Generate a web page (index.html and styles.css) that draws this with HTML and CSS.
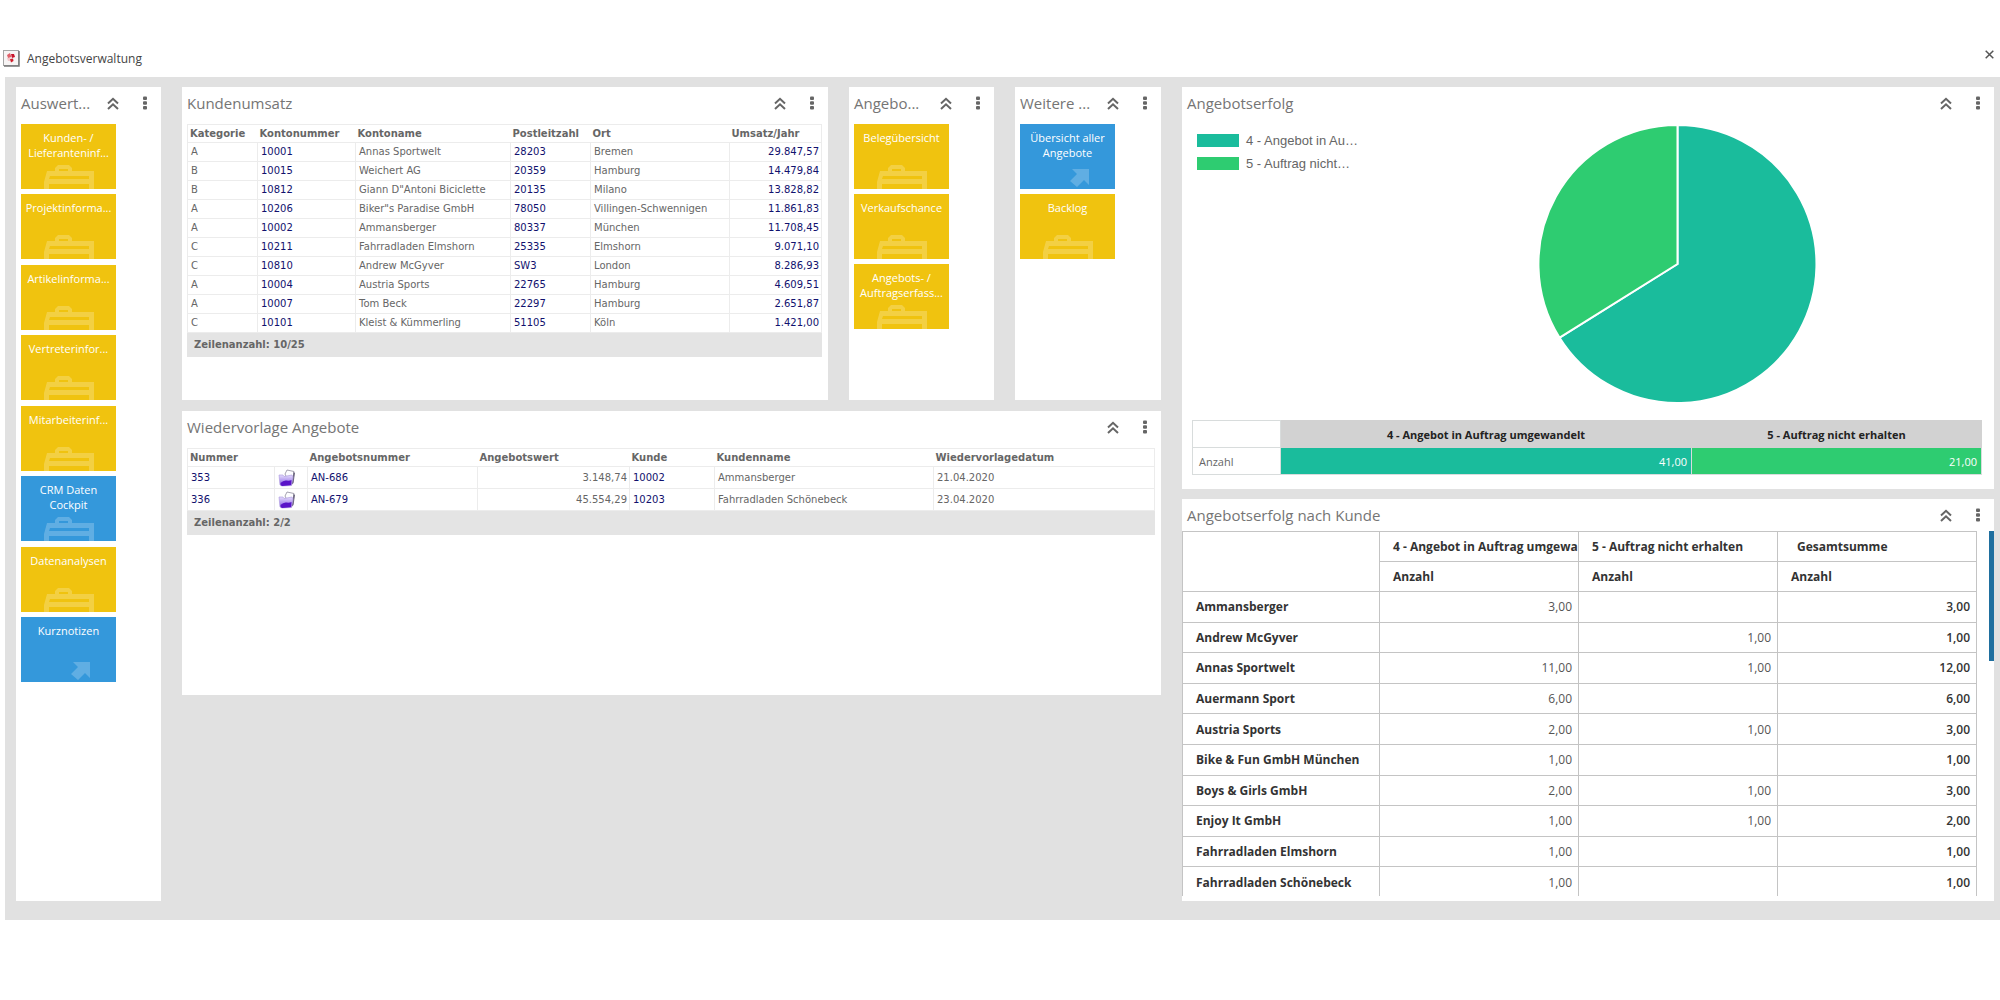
FILE: index.html
```html
<!DOCTYPE html>
<html lang="de">
<head>
<meta charset="utf-8">
<meta name="viewport" content="width=device-width, initial-scale=1">
<title>Angebotsverwaltung</title>
<link rel="stylesheet" href="styles.css">
</head>
<body>
<svg class="sprite" aria-hidden="true">
  <linearGradient id="folder-fill" x1="0" y1="0" x2="0" y2="1"><stop offset="0" stop-color="#e4dcfb"/><stop offset=".5" stop-color="#b39af0"/><stop offset="1" stop-color="#7a45d8"/></linearGradient>
  <symbol id="i-up" viewBox="0 0 12 13"><path d="M1 6.5 6 1.8 11 6.5M1 12 6 7.3 11 12" fill="none" stroke="currentColor" stroke-width="2"/></symbol>
  <symbol id="i-dots" viewBox="0 0 4 14"><rect x="0" y="0.5" width="4" height="3.4" rx="1"/><rect x="0" y="5.3" width="4" height="3.4" rx="1"/><rect x="0" y="10.1" width="4" height="3.4" rx="1"/></symbol>
  <symbol id="i-case" viewBox="0 0 50 24"><path fill-rule="evenodd" d="M3 6H11V3L14 0H25L28 3V6H50V24H45V19H5V24H0V17ZM15 6H24V4H15ZM6 11 5 14H45V11Z"/></symbol>
  <symbol id="i-arrow" viewBox="0 0 19 19"><path d="M2 1H19V17L14 12 7 19 0 13 7 6Z"/></symbol>
  <symbol id="i-folder" viewBox="0 0 18 18">
    <path d="M7 5 9 1l7 1.500-1 11-3 2z" fill="#fdfdff" stroke="#8e8a9c" stroke-width=".8"/>
    <path d="M15.500 3 17 4 15.500 14l-2 2z" fill="#6d6780"/>
    <path d="M1 6h4l1 1.500 8-1.500 1 2-1.500 8.500L4 17 2 16z" fill="url(#folder-fill)" stroke="#a794dd" stroke-width=".6"/>
    <path d="M2.500 14q3-3 6-2.500t5-.5l-.5 5L4 17q-1.500-.5-1.500-3z" fill="#5a14c8"/>
  </symbol>
</svg>

<header class="titlebar">
  <svg class="titlebar-icon" viewBox="0 0 17 17" aria-hidden="true">
    <rect x=".5" y=".5" width="15" height="15" fill="#f7f4f4" stroke="#a5a5a5"/>
    <path d="M16 1V16H1" fill="none" stroke="#777" stroke-width="1.500"/>
    <path d="M4 5 7 3 8.500 7 5 8Z" fill="#e0606a"/><path d="M8 4 11 4 12 7 9 8Z" fill="#c8142a"/>
    <path d="M4 8 7 8 8 11 5 11Z" fill="#f3c6c9"/><path d="M7 9 10 8.500 10.500 11 8 12.500Z" fill="#d01f2c"/>
  </svg>
  <h1>Angebotsverwaltung</h1>
  <button class="close" aria-label="Schließen"><svg viewBox="0 0 9 9"><path d="M.7.7 8.300 8.300M8.300.7.7 8.300" stroke="#555" stroke-width="1.500"/></svg></button>
</header>

<main class="dashboard">
  <section class="panel">
    <header class="panel-head"><h2>Auswert...</h2><button aria-label="Einklappen"><svg class="up"><use href="#i-up"/></svg></button><button aria-label="Menü"><svg class="dots"><use href="#i-dots"/></svg></button></header>
    <div class="tiles tiles-tall">
      <button class="tile"><span>Kunden- /<br>Lieferanteninf...</span><svg class="case"><use href="#i-case"/></svg></button>
      <button class="tile"><span>Projektinforma...</span><svg class="case"><use href="#i-case"/></svg></button>
      <button class="tile"><span>Artikelinforma...</span><svg class="case"><use href="#i-case"/></svg></button>
      <button class="tile"><span>Vertreterinfor...</span><svg class="case"><use href="#i-case"/></svg></button>
      <button class="tile"><span>Mitarbeiterinf...</span><svg class="case"><use href="#i-case"/></svg></button>
      <button class="tile blue"><span>CRM Daten<br>Cockpit</span><svg class="case"><use href="#i-case"/></svg></button>
      <button class="tile"><span>Datenanalysen</span><svg class="case"><use href="#i-case"/></svg></button>
      <button class="tile blue"><span>Kurznotizen</span><svg class="arrow"><use href="#i-arrow"/></svg></button>
    </div>
  </section>

  <div class="middle">
    <section class="panel">
      <header class="panel-head"><h2>Kundenumsatz</h2><button aria-label="Einklappen"><svg class="up"><use href="#i-up"/></svg></button><button aria-label="Menü"><svg class="dots"><use href="#i-dots"/></svg></button></header>
      <div class="panel-body">
        <table class="list">
          <colgroup><col class="w70"><col class="w98"><col class="w155"><col class="w80"><col class="w139"><col class="w92"></colgroup>
          <thead><tr><th>Kategorie</th><th>Kontonummer</th><th>Kontoname</th><th>Postleitzahl</th><th>Ort</th><th>Umsatz/Jahr</th></tr></thead>
          <tbody>
            <tr><td>A</td><td><a href="#">10001</a></td><td>Annas Sportwelt</td><td><a href="#">28203</a></td><td>Bremen</td><td class="num"><a href="#">29.847,57</a></td></tr>
            <tr><td>B</td><td><a href="#">10015</a></td><td>Weichert AG</td><td><a href="#">20359</a></td><td>Hamburg</td><td class="num"><a href="#">14.479,84</a></td></tr>
            <tr><td>B</td><td><a href="#">10812</a></td><td>Giann D"Antoni Biciclette</td><td><a href="#">20135</a></td><td>Milano</td><td class="num"><a href="#">13.828,82</a></td></tr>
            <tr><td>A</td><td><a href="#">10206</a></td><td>Biker"s Paradise GmbH</td><td><a href="#">78050</a></td><td>Villingen-Schwennigen</td><td class="num"><a href="#">11.861,83</a></td></tr>
            <tr><td>A</td><td><a href="#">10002</a></td><td>Ammansberger</td><td><a href="#">80337</a></td><td>München</td><td class="num"><a href="#">11.708,45</a></td></tr>
            <tr><td>C</td><td><a href="#">10211</a></td><td>Fahrradladen Elmshorn</td><td><a href="#">25335</a></td><td>Elmshorn</td><td class="num"><a href="#">9.071,10</a></td></tr>
            <tr><td>C</td><td><a href="#">10810</a></td><td>Andrew McGyver</td><td><a href="#">SW3</a></td><td>London</td><td class="num"><a href="#">8.286,93</a></td></tr>
            <tr><td>A</td><td><a href="#">10004</a></td><td>Austria Sports</td><td><a href="#">22765</a></td><td>Hamburg</td><td class="num"><a href="#">4.609,51</a></td></tr>
            <tr><td>A</td><td><a href="#">10007</a></td><td>Tom Beck</td><td><a href="#">22297</a></td><td>Hamburg</td><td class="num"><a href="#">2.651,87</a></td></tr>
            <tr><td>C</td><td><a href="#">10101</a></td><td>Kleist &amp; Kümmerling</td><td><a href="#">51105</a></td><td>Köln</td><td class="num"><a href="#">1.421,00</a></td></tr>
          </tbody>
          <tfoot><tr><td colspan="6">Zeilenanzahl: 10/25</td></tr></tfoot>
        </table>
      </div>
    </section>

    <section class="panel">
      <header class="panel-head"><h2>Angebo...</h2><button aria-label="Einklappen"><svg class="up"><use href="#i-up"/></svg></button><button aria-label="Menü"><svg class="dots"><use href="#i-dots"/></svg></button></header>
      <div class="tiles">
        <button class="tile"><span>Belegübersicht</span><svg class="case"><use href="#i-case"/></svg></button>
        <button class="tile"><span>Verkaufschance</span><svg class="case"><use href="#i-case"/></svg></button>
        <button class="tile"><span>Angebots- /<br>Auftragserfass...</span><svg class="case"><use href="#i-case"/></svg></button>
      </div>
    </section>

    <section class="panel">
      <header class="panel-head"><h2>Weitere ...</h2><button aria-label="Einklappen"><svg class="up"><use href="#i-up"/></svg></button><button aria-label="Menü"><svg class="dots"><use href="#i-dots"/></svg></button></header>
      <div class="tiles">
        <button class="tile blue"><span>Übersicht aller<br>Angebote</span><svg class="arrow"><use href="#i-arrow"/></svg></button>
        <button class="tile"><span>Backlog</span><svg class="case"><use href="#i-case"/></svg></button>
      </div>
    </section>

    <section class="panel wide">
      <header class="panel-head"><h2>Wiedervorlage Angebote</h2><button aria-label="Einklappen"><svg class="up"><use href="#i-up"/></svg></button><button aria-label="Menü"><svg class="dots"><use href="#i-dots"/></svg></button></header>
      <div class="panel-body">
        <table class="list list-roomy">
          <colgroup><col class="w87"><col class="w33"><col class="w170"><col class="w152"><col class="w85"><col class="w219"><col class="w221"></colgroup>
          <thead><tr><th>Nummer</th><th></th><th>Angebotsnummer</th><th>Angebotswert</th><th>Kunde</th><th>Kundenname</th><th>Wiedervorlagedatum</th></tr></thead>
          <tbody>
            <tr><td><a href="#">353</a></td><td><svg class="folder"><use href="#i-folder"/></svg></td><td><a href="#">AN-686</a></td><td class="num">3.148,74</td><td><a href="#">10002</a></td><td>Ammansberger</td><td>21.04.2020</td></tr>
            <tr><td><a href="#">336</a></td><td><svg class="folder"><use href="#i-folder"/></svg></td><td><a href="#">AN-679</a></td><td class="num">45.554,29</td><td><a href="#">10203</a></td><td>Fahrradladen Schönebeck</td><td>23.04.2020</td></tr>
          </tbody>
          <tfoot><tr><td colspan="7">Zeilenanzahl: 2/2</td></tr></tfoot>
        </table>
      </div>
    </section>
  </div>

  <div class="right">
    <section class="panel">
      <header class="panel-head"><h2>Angebotserfolg</h2><button aria-label="Einklappen"><svg class="up"><use href="#i-up"/></svg></button><button aria-label="Menü"><svg class="dots"><use href="#i-dots"/></svg></button></header>
      <div class="chart">
        <ul class="legend">
          <li><span class="swatch teal"></span>4 - Angebot in Au…</li>
          <li><span class="swatch green"></span>5 - Auftrag nicht…</li>
        </ul>
        <svg class="pie" viewBox="-140 -140 280 280" role="img" aria-label="Angebotserfolg">
          <path d="M0 0V-139A139 139 0 1 1 -117.900 73.700Z" fill="#1abc9c" stroke="#fff" stroke-width="2"/>
          <path d="M0 0-117.900 73.700A139 139 0 0 1 0-139Z" fill="#2ecc71" stroke="#fff" stroke-width="2"/>
        </svg>
      </div>
      <table class="summary">
        <colgroup><col class="w88"><col class="w411"><col class="w290"></colgroup>
        <thead><tr><td></td><th>4 - Angebot in Auftrag umgewandelt</th><th>5 - Auftrag nicht erhalten</th></tr></thead>
        <tbody><tr><th scope="row">Anzahl</th><td class="teal">41,00</td><td class="green">21,00</td></tr></tbody>
      </table>
    </section>

    <section class="panel">
      <header class="panel-head"><h2>Angebotserfolg nach Kunde</h2><button aria-label="Einklappen"><svg class="up"><use href="#i-up"/></svg></button><button aria-label="Menü"><svg class="dots"><use href="#i-dots"/></svg></button></header>
      <div class="scroller">
        <table class="pivot">
          <colgroup><col class="w197"><col class="w199"><col class="w199"><col class="w199"></colgroup>
          <thead>
            <tr><td rowspan="2"></td><th>4 - Angebot in Auftrag umgewandelt</th><th>5 - Auftrag nicht erhalten</th><th class="total">Gesamtsumme</th></tr>
            <tr><th>Anzahl</th><th>Anzahl</th><th>Anzahl</th></tr>
          </thead>
          <tbody>
            <tr><th>Ammansberger</th><td>3,00</td><td></td><td>3,00</td></tr>
            <tr><th>Andrew McGyver</th><td></td><td>1,00</td><td>1,00</td></tr>
            <tr><th>Annas Sportwelt</th><td>11,00</td><td>1,00</td><td>12,00</td></tr>
            <tr><th>Auermann Sport</th><td>6,00</td><td></td><td>6,00</td></tr>
            <tr><th>Austria Sports</th><td>2,00</td><td>1,00</td><td>3,00</td></tr>
            <tr><th>Bike &amp; Fun GmbH München</th><td>1,00</td><td></td><td>1,00</td></tr>
            <tr><th>Boys &amp; Girls GmbH</th><td>2,00</td><td>1,00</td><td>3,00</td></tr>
            <tr><th>Enjoy It GmbH</th><td>1,00</td><td>1,00</td><td>2,00</td></tr>
            <tr><th>Fahrradladen Elmshorn</th><td>1,00</td><td></td><td>1,00</td></tr>
            <tr><th>Fahrradladen Schönebeck</th><td>1,00</td><td></td><td>1,00</td></tr>
          </tbody>
        </table>
        <div class="thumb"></div>
      </div>
    </section>
  </div>
</main>
</body>
</html>
```
FILE: styles.css
```css
* { box-sizing: border-box; }

body {
  margin: 0;
  padding-top: 40px;
  background: #fff;
  color: #666;
  font-family: "Open Sans", "Noto Sans", sans-serif;
  font-size: 12px;
}

h1, h2 { margin: 0; font-weight: 400; }
button { border: 0; padding: 0; background: none; font: inherit; cursor: pointer; }
svg { display: block; }
.sprite { position: absolute; width: 0; height: 0; }

/* Window title */
.titlebar {
  display: flex;
  align-items: center;
  height: 37px;
  padding: 0 6px 0 3px;
}
.titlebar-icon { width: 17px; height: 17px; }
.titlebar h1 { flex: 1; margin-left: 7px; font-size: 12px; color: #444; }
.close { align-self: flex-start; margin-top: 10px; }
.close svg { width: 9px; height: 9px; }

/* Dashboard grid */
.dashboard {
  display: grid;
  grid-template-columns: 145px minmax(0, 979fr) minmax(0, 812fr);
  column-gap: 21px;
  margin-left: 5px;
  padding: 10px 6px 19px 11px;
  background: #e1e1e1;
}
.middle {
  display: grid;
  grid-template-columns: minmax(0, 1fr) 145px 146px;
  grid-template-rows: minmax(313px, auto) minmax(284px, auto);
  gap: 11px 21px;
  align-content: start;
}
.wide { grid-column: 1 / -1; }
.right {
  display: grid;
  grid-template-rows: minmax(402px, auto) minmax(402px, auto);
  row-gap: 10px;
}

.panel { background: #fff; min-width: 0; }
.panel-head {
  display: flex;
  align-items: center;
  height: 32px;
  padding: 0 14px 0 5px;
}
.panel-head h2 { flex: 1; min-width: 0; font-size: 15px; color: #757575; white-space: nowrap; }
.panel-head button { color: #666; margin-left: 24px; }
.panel-head button:first-of-type { margin-left: 4px; }
.up { width: 12px; height: 13px; }
.dots { width: 4px; height: 14px; fill: currentColor; }
.panel-body { padding: 5px 7px 5px 5px; }

/* Launch tiles */
.tiles {
  display: flex;
  flex-direction: column;
  gap: 5px;
  padding: 5px 5px 0;
}
.tiles-tall { min-height: 563px; justify-content: space-between; }
.tile {
  position: relative;
  display: flex;
  justify-content: center;
  align-items: flex-start;
  width: 95px;
  height: 65px;
  padding-top: 6px;
  overflow: hidden;
  background: #f0c30f;
  color: #fff;
  font-size: 11px;
  line-height: 15px;
  text-align: center;
  white-space: nowrap;
}
.tile.blue { background: #3498db; }
.tile svg { position: absolute; fill: rgba(255, 255, 255, 0.22); }
.case { left: 23px; bottom: 0; width: 50px; height: 24px; }
.arrow { left: 50px; bottom: 2px; width: 19px; height: 19px; }

/* Tables */
table { width: 100%; border-collapse: collapse; table-layout: fixed; }
th, td { padding: 0; text-align: left; white-space: nowrap; }

.list { font-family: "DejaVu Sans", Verdana, sans-serif; font-size: 10px; line-height: 12px; border: 1px solid #ececec; }
.list th { height: 18px; padding-left: 2px; font-weight: 700; }
.list td { height: 19px; padding: 0 2px 0 3px; border: 1px solid #ececec; }
.list-roomy td { height: 22px; }
.list tfoot td { height: 24px; padding-left: 6px; border-color: #e4e4e4; background: #e4e4e4; font-weight: 700; }
.list a { color: #11116e; text-decoration: none; }
.list .num { text-align: right; }
.folder { width: 18px; height: 18px; }

.w33 { width: 33px; } .w70 { width: 70px; } .w80 { width: 80px; } .w85 { width: 85px; }
.w87 { width: 87px; } .w88 { width: 88px; } .w92 { width: 92px; } .w98 { width: 98px; }
.w139 { width: 139px; } .w152 { width: 152px; } .w155 { width: 155px; } .w170 { width: 170px; }
.w197 { width: 197px; } .w199 { width: 199px; } .w219 { width: 219px; } .w221 { width: 221px; }
.w290 { width: 290px; } .w411 { width: 411px; }

/* Pie chart */
.chart { display: flex; padding: 5px 11px 0 15px; }
.legend {
  display: grid;
  align-content: start;
  gap: 10px;
  flex: 0 0 175px;
  margin: 0;
  padding: 10px 0 0;
  list-style: none;
  font-family: "Liberation Sans", Arial, sans-serif;
  line-height: 13px;
}
.legend li { display: flex; align-items: center; gap: 7px; font-size: 13px; white-space: nowrap; }
.swatch { width: 42px; height: 13px; }
.teal { background: #1abc9c; }
.green { background: #2ecc71; }
.pie { flex: 1; height: 280px; min-width: 0; }

.summary { width: auto; min-width: calc(100% - 22px); margin: 16px 12px 14px 10px; font-size: 11px; }
.summary td, .summary th { height: 27px; border: 1px solid #d8dcdc; }
.summary thead th { background: #d2d2d2; border-color: #d2d2d2; color: #222; font-weight: 700; text-align: center; }
.summary tbody th { padding-left: 6px; font-weight: 400; }
.summary tbody td { padding-right: 4px; color: #fff; text-align: right; }

.scroller { display: flex; justify-content: space-between; align-items: flex-start; height: 365px; overflow: hidden; }
.pivot { flex: 1; height: 367px; margin-right: 12px; color: #333; }
.pivot th, .pivot td { height: 30px; border: 1px solid #c4c4c4; overflow: hidden; }
.pivot th { padding-left: 13px; font-weight: 700; }
.pivot .total { padding-left: 19px; }
.pivot td { padding-right: 6px; color: #555; text-align: right; }
.pivot td:last-child { color: #333; font-weight: 600; }
.thumb { flex: 0 0 5px; height: 130px; background: #1f6f9f; }
```
